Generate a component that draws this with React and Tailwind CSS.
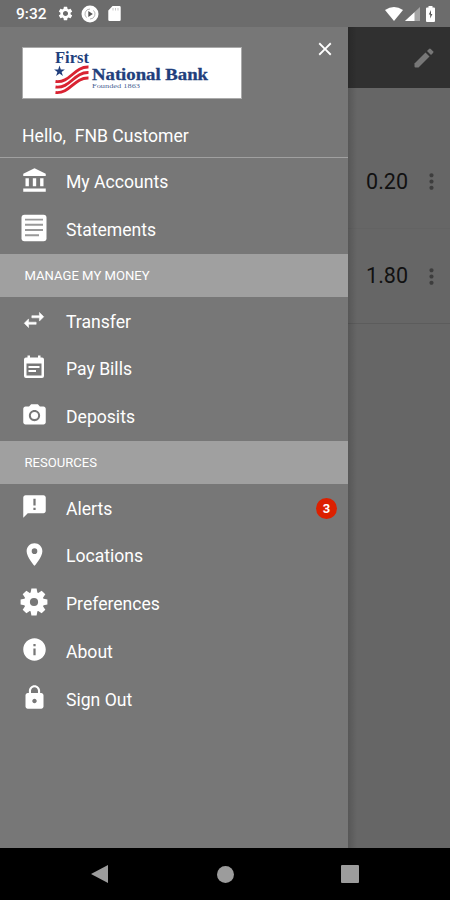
import {
  MdAccountBalance,
  MdCameraAlt,
  MdAnnouncement,
  MdPlace,
  MdInfo,
  MdLock,
  MdMoreVert,
  MdClose,
  MdSettings,
} from 'react-icons/md';

function StatementIcon() {
  return (
    <svg viewBox="0 0 26 28" className="w-[26px] h-[28px]">
      <rect x="0.5" y="0.8" width="25" height="26.4" rx="3" fill="#fff" />
      <path d="M4 5.6h18M4 10.8h18M4 16h18M4 21.2h14" stroke="#999" strokeWidth="1.900" />
    </svg>
  );
}

function TransferIcon() {
  return (
    <svg viewBox="0 0 24 24" className="size-[26px]" fill="#fff" stroke="#fff" strokeWidth=".5">
      <path d="M6.990 11L3 15l3.990 4v-3H14v-2H6.990v-3zM21 9l-3.990-4v3H10v2h7.010v3L21 9z" />
    </svg>
  );
}

function BillIcon() {
  return (
    <svg viewBox="0 0 22 24" className="w-[22px] h-[24px]">
      <path fill="#fff" fillRule="evenodd" d="M3 2.500h1.500V.500H7v2h8v-2h2.500v2H19a2 2 0 0 1 2 2V21a2 2 0 0 1-2 2H3a2 2 0 0 1-2-2V4.500a2 2 0 0 1 2-2zM3.500 8.500V20.500h15V8.500z" />
      <path d="M5.500 12h11M5.500 16h7.500" stroke="#fff" strokeWidth="2.200" />
    </svg>
  );
}

function GearIcon() {
  return (
    <svg viewBox="-14 -14 28 28" className="w-[28px] h-[28px]">
      <g fill="#fff">
        {[0, 45, 90, 135].map((a) => (
          <path key={a} transform={`rotate(${a})`} d="M-3.500-8.500L-2.600-13.400H2.600L3.500-8.500V8.500L2.600 13.400H-2.600L-3.500 8.500z" />
        ))}
        <circle r="10" />
      </g>
      <circle r="4.100" fill="#777" />
    </svg>
  );
}

function PencilIcon() {
  return (
    <svg viewBox="0 0 20 20" className="size-[20px]" fill="currentColor">
      <path d="M.5 15.500L11.500 4.500l4 4L4.500 19.500H1.500a1 1 0 0 1-1-1z" />
      <path d="M13 3L15 1a1.300 1.300 0 0 1 1.800 0L19 3.200a1.300 1.300 0 0 1 0 1.800L17 7z" />
    </svg>
  );
}

const accounts = [
  { label: 'My Accounts', icon: <MdAccountBalance size={27} /> },
  { label: 'Statements', icon: <StatementIcon /> },
];

const money = [
  { label: 'Transfer', icon: <TransferIcon /> },
  { label: 'Pay Bills', icon: <BillIcon /> },
  { label: 'Deposits', icon: <MdCameraAlt size={27} /> },
];

const resources = [
  { label: 'Alerts', icon: <MdAnnouncement size={27} />, badge: 3 },
  { label: 'Locations', icon: <MdPlace size={27} /> },
  { label: 'Preferences', icon: <GearIcon /> },
  { label: 'About', icon: <MdInfo size={27} /> },
  { label: 'Sign Out', icon: <MdLock size={27} /> },
];

function MenuItem({ item }) {
  return (
    <li className="flex h-[47.75px] items-center pl-5 pr-[11px] pt-px">
      <span className="mb-1 flex w-7 justify-center">{item.icon}</span>
      <span className="ml-[18px] flex-1 text-[17.6px] leading-6">{item.label}</span>
      {item.badge && (
        <span className="flex size-[21px] items-center justify-center rounded-full bg-[#dc2000] text-[13px] font-bold">
          {item.badge}
        </span>
      )}
    </li>
  );
}

function SectionTitle({ children }) {
  return (
    <h2 className="flex h-[43.8px] items-center bg-[#a0a0a0] pl-[24.5px] text-[13.1px] text-white">
      {children}
    </h2>
  );
}

function StatusBar() {
  return (
    <header className="flex h-[27px] items-center bg-[#6c6c6c] pl-4 pr-[14px] text-white">
      <span className="w-[31px] whitespace-nowrap pt-[2px] text-[15.5px] font-medium leading-none">9:32</span>
      <MdSettings size={17} className="ml-[10px]" />
      <svg viewBox="0 0 18 18" className="ml-[7px] size-[18px]">
        <circle cx="9" cy="9" r="8.500" fill="#fff" />
        <path d="M5.500 12.600A5 5 0 0 1 9 4M12.500 5.400A5 5 0 0 1 9 14" fill="none" stroke="#aaa" strokeWidth=".9" />
        <path d="M7.300 6v6l4.500-3z" fill="#555" />
      </svg>
      <svg viewBox="0 0 13 15" className="ml-[9px] h-[15px] w-[13px]">
        <path d="M4.500 0H11.500a1.200 1.200 0 0 1 1.200 1.200V13.800a1.200 1.200 0 0 1-1.200 1.200H1.500A1.200 1.200 0 0 1 .3 13.800V4.500z" fill="#fff" />
        <path d="M5 2v2.500M7.500 2v2.500M10 2v2.500" stroke="#bbb" strokeWidth=".8" />
      </svg>
      <svg viewBox="0 0 18 14" className="ml-auto h-[14px] w-[18px]">
        <path d="M9 14L0 3Q9-3 18 3z" fill="#fff" />
      </svg>
      <svg viewBox="0 0 15 14" className="ml-[2px] h-[14px] w-[15px]">
        <path d="M15 0v14H0z" fill="#a5a5a5" />
        <path d="M9.500 5.200V14H0z" fill="#fff" />
      </svg>
      <svg viewBox="0 0 9 16" className="ml-[6px] mr-px h-[16px] w-[9px]">
        <path d="M2.500 0h4v1.500h1.500a1 1 0 0 1 1 1V15a1 1 0 0 1-1 1H1a1 1 0 0 1-1-1V2.500a1 1 0 0 1 1-1h1.500z" fill="#fff" />
        <path d="M5 4L2.800 8.500h1.400v4L6.400 8H5z" fill="#555" />
      </svg>
    </header>
  );
}

function BankLogo() {
  return (
    <div className="h-[52px] w-[220px] border border-[#aaa] bg-white">
      <svg viewBox="0 0 218 50" className="h-full w-full">
        <g fill="#213e7c" fontFamily="'Liberation Serif', serif">
          <text x="32" y="15" fontSize="17.500" fontWeight="bold" textLength="34" lengthAdjust="spacingAndGlyphs">First</text>
          <text x="69" y="31.500" fontSize="17" fontWeight="bold" stroke="#213e7c" strokeWidth=".3" textLength="116" lengthAdjust="spacingAndGlyphs">National Bank</text>
          <text x="69" y="39.500" fontSize="7" fillOpacity=".85" textLength="48" lengthAdjust="spacingAndGlyphs">Founded 1863</text>
          <path d="M36.500 17.500l1.300 3.900h4.100l-3.300 2.500 1.300 4L36.500 25.400l-3.400 2.500 1.300-4-3.300-2.500h4.100z" />
        </g>
        <g fill="none" stroke="#d92332" strokeWidth="2.900">
          <path d="M32.500 33.500C47 35.500 51 18.500 65.500 19" />
          <path d="M32.500 39C47 41 51 24 65.500 24.500" />
          <path d="M32.500 44.500C47 46 51 29.500 65.500 30" />
        </g>
      </svg>
    </div>
  );
}

function Drawer() {
  return (
    <aside className="flex w-[348px] flex-col bg-[#777] text-white">
      <div className="flex h-[78px] items-start justify-between pl-[22px] pr-[12px] pt-[20.4px]">
        <BankLogo />
        <MdClose size={22} className="-mt-[9.4px]" />
      </div>
      <div className="flex h-[53px] items-center whitespace-pre border-b border-[#a0a0a0] pl-[22px] pt-[11px] text-[17.6px]">
        Hello,  FNB Customer
      </div>
      <ul>{accounts.map((item) => <MenuItem key={item.label} item={item} />)}</ul>
      <SectionTitle>MANAGE MY MONEY</SectionTitle>
      <ul>{money.map((item) => <MenuItem key={item.label} item={item} />)}</ul>
      <SectionTitle>RESOURCES</SectionTitle>
      <ul>{resources.map((item) => <MenuItem key={item.label} item={item} />)}</ul>
    </aside>
  );
}

function Balance({ value }) {
  return (
    <div className="flex h-[94px] items-center justify-end pr-[6px]">
      <span className="pt-px text-[21.5px] text-[#111]">{value}</span>
      <MdMoreVert size={25} className="ml-[11px] text-[#3d3d3d]" />
    </div>
  );
}

function AccountsPane() {
  return (
    <main className="relative flex-1 bg-[#666]">
      <div className="flex h-[61px] items-center justify-end bg-[#303030] pr-[16px] text-[#777]">
        <PencilIcon />
      </div>
      <div className="divide-y divide-[#636363] border-b border-[#5c5c5c] pt-[47px]">
        <Balance value="0.20" />
        <Balance value="1.80" />
      </div>
      <div className="absolute inset-y-0 left-0 w-[9px] bg-linear-to-r from-black/15 to-transparent" />
    </main>
  );
}

function NavBar() {
  return (
    <nav className="flex h-[52px] items-center bg-black pl-[91px] text-[#9c9c9c]">
      <svg viewBox="0 0 17 18" className="h-[18px] w-[17px]"><path d="M17 0v18L0 9z" fill="currentColor" /></svg>
      <span className="ml-[109px] size-[17px] rounded-full bg-[#9c9c9c]" />
      <span className="ml-[107px] size-[18px] rounded-[1px] bg-[#9c9c9c]" />
    </nav>
  );
}

export default function App() {
  return (
    <div className="flex h-[900px] w-[450px] flex-col overflow-hidden font-['Roboto',sans-serif]">
      <StatusBar />
      <div className="flex h-[821px]">
        <Drawer />
        <AccountsPane />
      </div>
      <NavBar />
    </div>
  );
}
